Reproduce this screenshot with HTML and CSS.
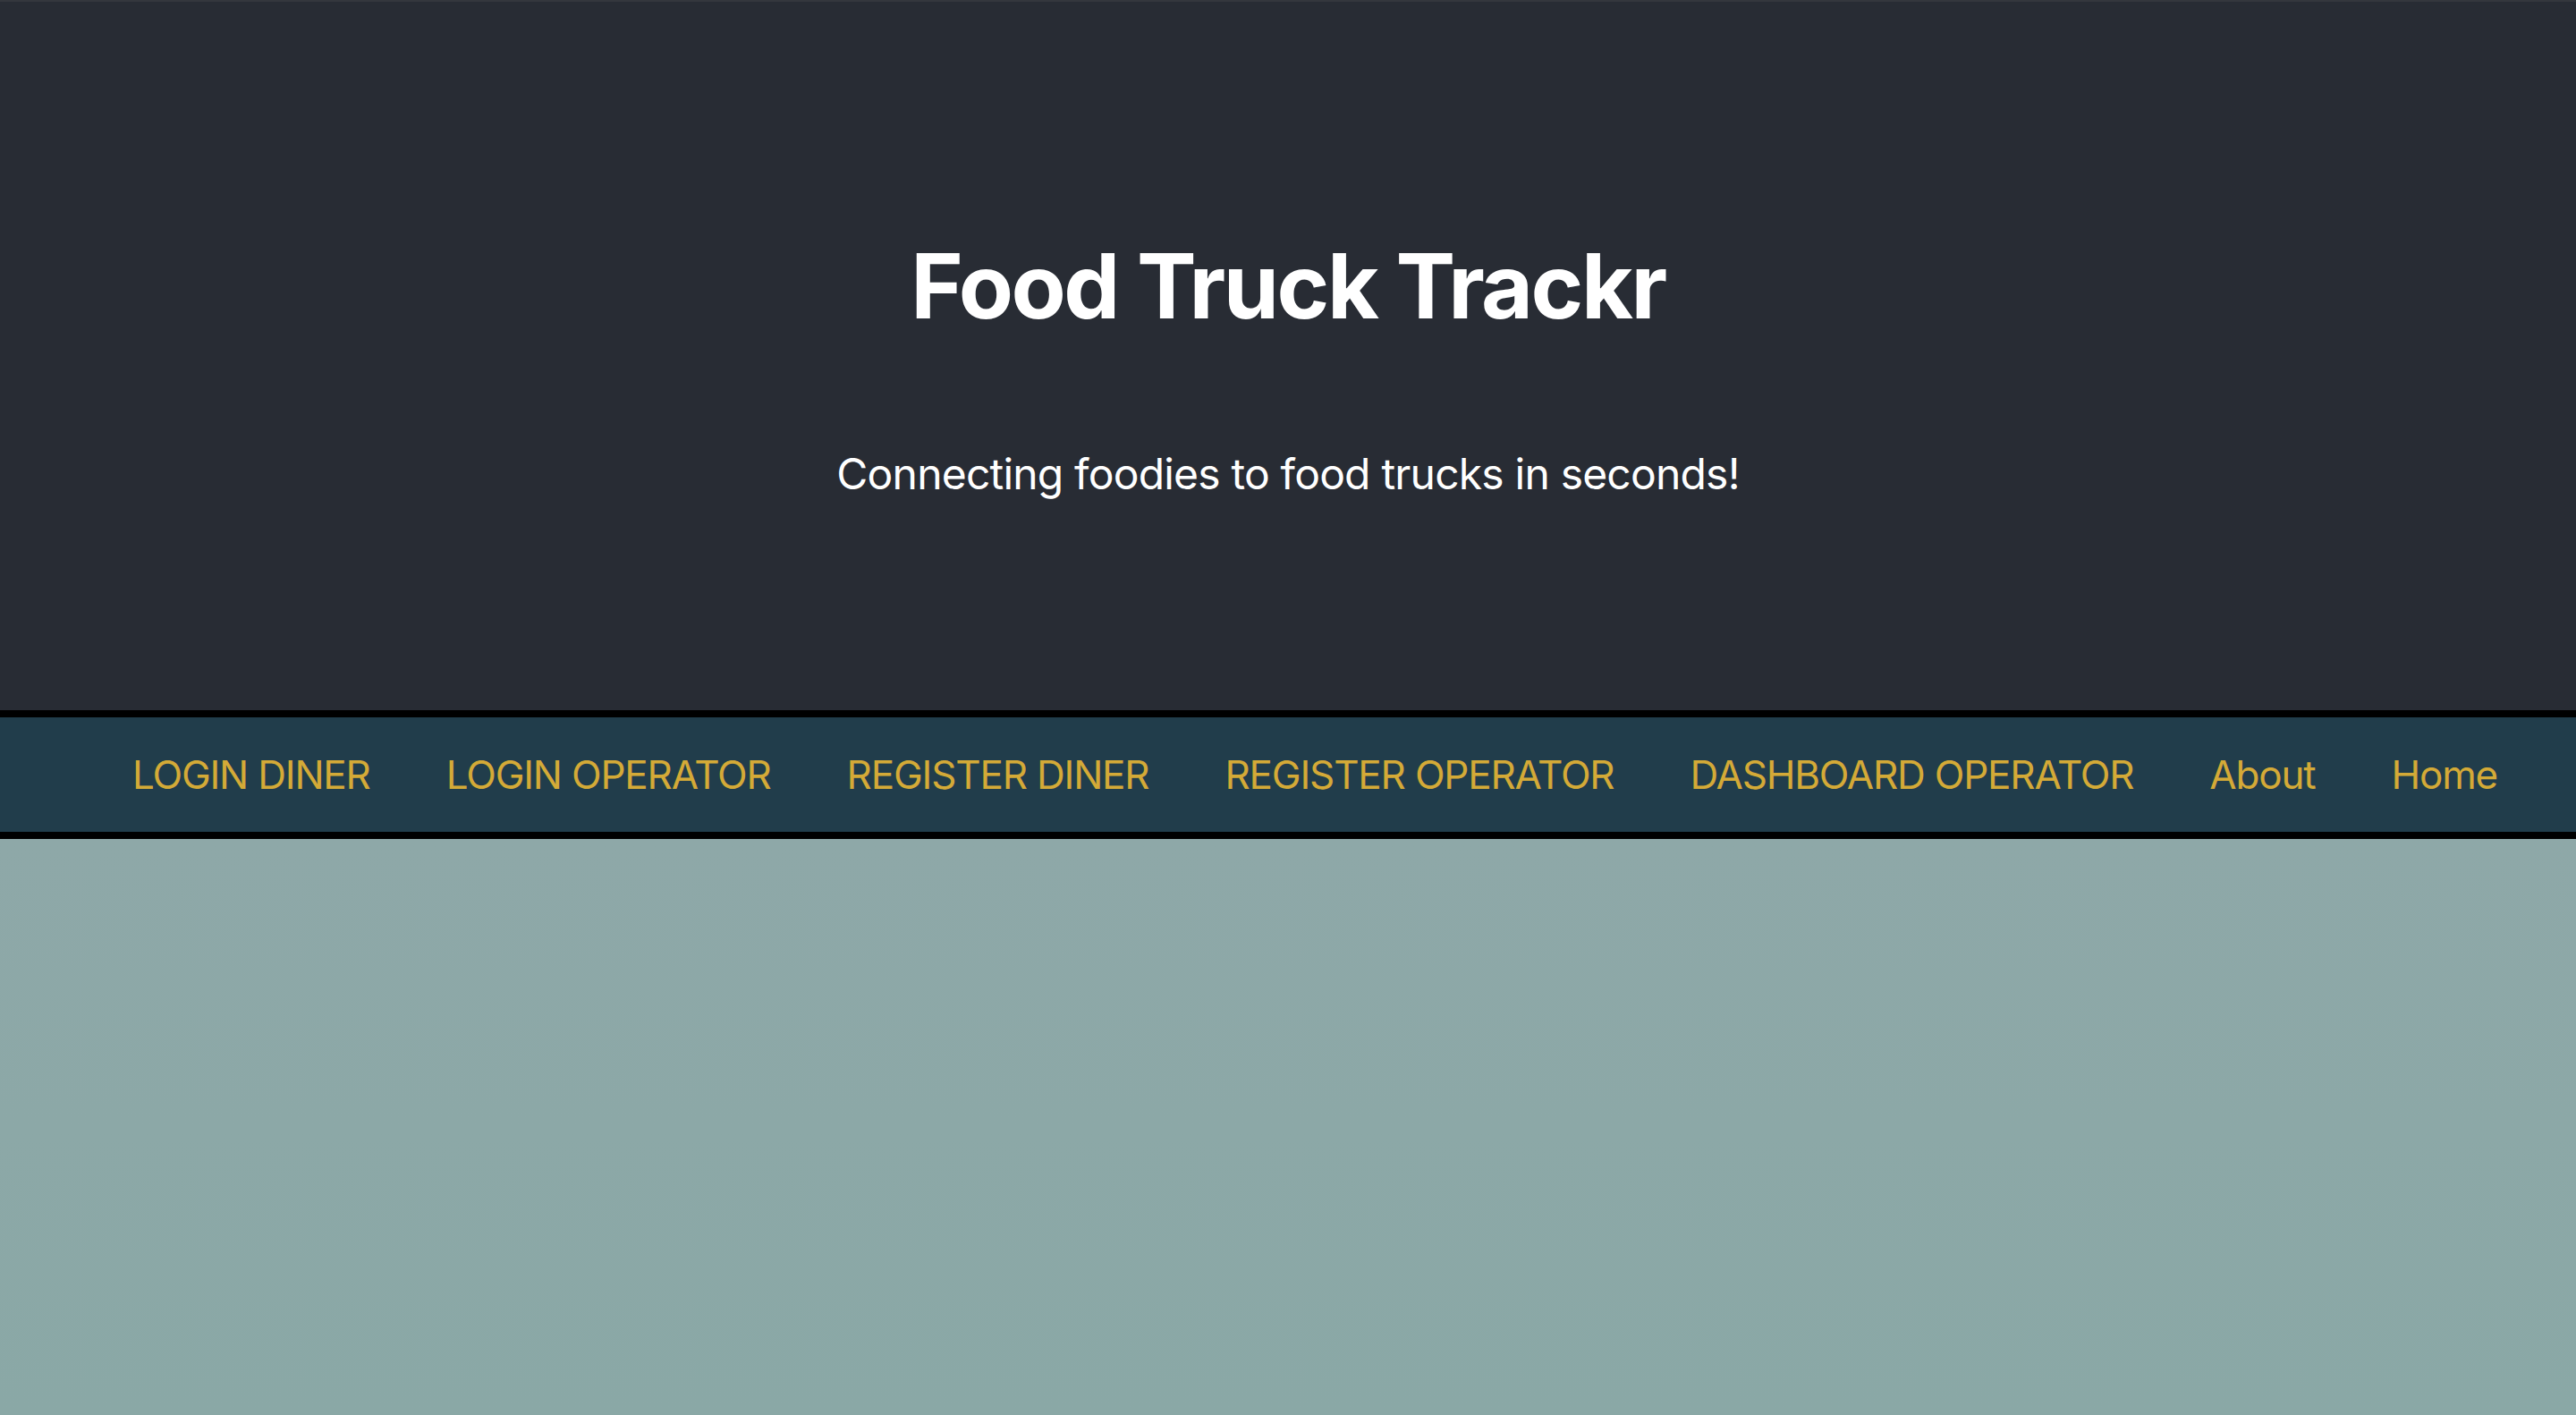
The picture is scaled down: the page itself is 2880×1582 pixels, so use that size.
FILE: index.html
```html
<!DOCTYPE html>
<html lang="en">
<head>
<meta charset="utf-8">
<title>Food Truck Trackr</title>
<link rel="stylesheet" href="styles.css">
</head>
<body>
<div class="app">
  <header class="hero">
    <h1 class="hero-title">Food Truck Trackr</h1>
    <p class="hero-sub">Connecting foodies to food trucks in seconds!</p>
  </header>
  <nav class="nav">
    <a class="nav-link" href="#">LOGIN DINER</a>
    <a class="nav-link" href="#">LOGIN OPERATOR</a>
    <a class="nav-link" href="#">REGISTER DINER</a>
    <a class="nav-link" href="#">REGISTER OPERATOR</a>
    <a class="nav-link" href="#">DASHBOARD OPERATOR</a>
    <a class="nav-link" href="#">About</a>
    <a class="nav-link" href="#">Home</a>
  </nav>
  <main class="content"></main>
</div>
</body>
</html>
```

FILE: styles.css
```css
html, body {
  margin: 0;
  padding: 0;
  height: 100%;
}
body {
  font-family: Inter, "Noto Sans", "Liberation Sans", sans-serif;
  background: #8ca8a8;
}
.app {
  display: flex;
  flex-direction: column;
  min-height: 100vh;
}
.hero {
  background: #282c34;
  border-top: 2px solid #34373d;
  box-sizing: border-box;
  height: 794px;
  padding-top: 258px;
  text-align: center;
  color: #ffffff;
}
.hero-title {
  margin: 0;
  font-size: 100px;
  line-height: 120px;
  font-weight: 700;
  letter-spacing: -2.5px;
}
.hero-sub {
  margin: 121px 0 0;
  font-size: 48px;
  line-height: 58px;
  font-weight: 400;
  letter-spacing: -0.8px;
}
.nav {
  background: #213d4b;
  border-top: 8px solid #000000;
  border-bottom: 8px solid #000000;
  height: 128px;
  display: flex;
  align-items: center;
  justify-content: space-between;
  padding: 0 88px 0 148px;
}
.nav-link {
  color: #d4aa37;
  text-decoration: none;
  font-size: 44px;
  font-weight: 400;
  letter-spacing: -1.2px;
}
.content {
  flex: 1;
  background: linear-gradient(#8ea8a8, #8aa8a6);
}
```
